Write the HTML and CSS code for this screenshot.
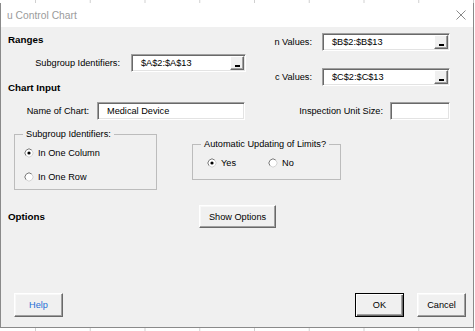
FILE: index.html
```html
<!DOCTYPE html>
<html>
<head>
<meta charset="utf-8">
<link rel="stylesheet" href="styles.css">
</head>
<body>
<div class="desk">
  <div class="window">
    <div class="titlebar">
      <span class="title">u Control Chart</span>
      <svg class="close" width="10" height="10" viewBox="0 0 10 10"><path d="M0.5 0.5 L9.5 9.5 M9.5 0.5 L0.5 9.5" stroke="#8a8a8a" stroke-width="1" fill="none"/></svg>
    </div>
    <div class="content">
      <div class="top">
        <div class="left">
          <div class="heading ranges">Ranges</div>
          <div class="field sub">
            <span class="lbl">Subgroup Identifiers:</span>
            <div class="box range w-sub"><span>$A$2:$A$13</span><span class="rbtn"><i></i></span></div>
          </div>
          <div class="heading chart">Chart Input</div>
        </div>
        <div class="right">
          <div class="field nrow">
            <span class="lbl">n Values:</span>
            <div class="box range w-val"><span>$B$2:$B$13</span><span class="rbtn"><i></i></span></div>
          </div>
          <div class="field crow">
            <span class="lbl">c Values:</span>
            <div class="box range w-val"><span>$C$2:$C$13</span><span class="rbtn"><i></i></span></div>
          </div>
        </div>
      </div>

      <div class="field chartrow">
        <span class="lbl lbl-name">Name of Chart:</span>
        <div class="box w-name"><span>Medical Device</span></div>
        <span class="lbl lbl-insp">Inspection Unit Size:</span>
        <div class="box w-insp"></div>
      </div>

      <div class="groups">
        <div class="group g1">
          <span class="legend">Subgroup Identifiers:</span>
          <div class="radio-row">
            <svg class="radio" width="10" height="10" viewBox="0 0 10 10"><circle cx="5" cy="5" r="4" fill="#fff"/><path d="M2.17 7.83 A4 4 0 0 1 7.83 2.17" stroke="#7a7a7a" fill="none"/><path d="M7.83 2.17 A4 4 0 0 1 2.17 7.83" stroke="#d4d4d4" fill="none"/><circle cx="5" cy="5" r="1.6" fill="#000"/></svg>
            <span>In One Column</span>
          </div>
          <div class="radio-row second">
            <svg class="radio" width="10" height="10" viewBox="0 0 10 10"><circle cx="5" cy="5" r="4" fill="#fff"/><path d="M2.17 7.83 A4 4 0 0 1 7.83 2.17" stroke="#7a7a7a" fill="none"/><path d="M7.83 2.17 A4 4 0 0 1 2.17 7.83" stroke="#d4d4d4" fill="none"/></svg>
            <span>In One Row</span>
          </div>
        </div>
        <div class="group g2">
          <span class="legend">Automatic Updating of Limits?</span>
          <div class="radio-row yes">
            <svg class="radio" width="10" height="10" viewBox="0 0 10 10"><circle cx="5" cy="5" r="4" fill="#fff"/><path d="M2.17 7.83 A4 4 0 0 1 7.83 2.17" stroke="#7a7a7a" fill="none"/><path d="M7.83 2.17 A4 4 0 0 1 2.17 7.83" stroke="#d4d4d4" fill="none"/><circle cx="5" cy="5" r="1.6" fill="#000"/></svg>
            <span>Yes</span>
          </div>
          <div class="radio-row">
            <svg class="radio" width="10" height="10" viewBox="0 0 10 10"><circle cx="5" cy="5" r="4" fill="#fff"/><path d="M2.17 7.83 A4 4 0 0 1 7.83 2.17" stroke="#7a7a7a" fill="none"/><path d="M7.83 2.17 A4 4 0 0 1 2.17 7.83" stroke="#d4d4d4" fill="none"/></svg>
            <span>No</span>
          </div>
        </div>
      </div>

      <div class="options">
        <span class="heading opt-label">Options</span>
        <button class="btn show">Show Options</button>
      </div>

      <div class="actions">
        <button class="btn help">Help</button>
        <button class="btn ok">OK</button>
        <button class="btn cancel">Cancel</button>
      </div>
    </div>
  </div>
</div>
</body>
</html>
```

FILE: styles.css
```css
* { box-sizing: border-box; }

body {
  margin: 0;
  width: 475px;
  height: 331px;
  overflow: hidden;
  font-family: "Liberation Sans", Arial, sans-serif;
  font-size: 9.2px;
  color: #000;
  background-color: #fff;
  background-image: linear-gradient(to right, #d0d0d0 1px, transparent 1px);
  background-size: 54.75px 100%;
  background-position: 35px 0;
}

.desk {
  height: 331px;
  padding-top: 3px;
}

.window {
  width: 474px;
  height: 325px;
  border: 1px solid #8a8a8a;
  border-top: none;
  background: #f0f0f0;
  display: flex;
  flex-direction: column;
}

.titlebar {
  height: 24px;
  flex: none;
  background: #fff;
  display: flex;
  align-items: center;
  justify-content: space-between;
  padding: 0 7px 0 6px;
}

.title {
  font-size: 10.3px;
  color: #9b9b9b;
}

.content {
  flex: 1;
  display: flex;
  flex-direction: column;
  padding: 0 7px 10px 7px;
}

.top { display: flex; }
.left { width: 238px; }
.right { flex: 1; }

.heading {
  font-weight: bold;
  font-size: 9.8px;
  line-height: 12px;
  height: 12px;
}
.ranges { margin-top: 7px; }
.chart { margin-top: 10px; }

.field {
  display: flex;
  align-items: center;
}
.lbl { text-align: right; white-space: nowrap; }

.sub { margin-top: 8px; }
.sub .lbl { width: 112px; margin-right: 11px; }

.right .lbl { width: 66px; margin-right: 10px; }
.nrow { margin-top: 6px; }
.crow { margin-top: 17px; }

.box {
  height: 18px;
  background: #fff;
  border: 1px solid;
  border-color: #a0a0a0 #fff #fff #a0a0a0;
  box-shadow: inset 1px 1px #696969, inset -1px -1px #e3e3e3;
  display: flex;
  align-items: center;
  padding-left: 9px;
  white-space: nowrap;
}
.range {
  justify-content: space-between;
  align-items: stretch;
  padding-right: 1px;
}
.range > span:first-child {
  display: flex;
  align-items: center;
}
.w-sub { width: 115px; }
.w-val { width: 128px; }
.w-name { width: 148px; }
.w-insp { width: 60px; }

.rbtn {
  align-self: flex-end;
  width: 14px;
  height: 14px;
  margin-bottom: 1px;
  background: #f0f0f0;
  border: 1px solid;
  border-color: #fff #696969 #696969 #fff;
  box-shadow: inset -1px -1px #a0a0a0;
  display: flex;
  justify-content: center;
  align-items: flex-end;
  padding-bottom: 2px;
}
.rbtn i {
  display: block;
  width: 5px;
  height: 2px;
  background: #000;
}

.chartrow { margin-top: 8px; }
.lbl-name { width: 81px; margin-right: 8px; }
.lbl-insp { width: 138px; margin-right: 7px; }

.groups {
  display: flex;
  align-items: flex-start;
  margin-top: 14px;
}
.group {
  position: relative;
  border: 1px solid #bcbcbc;
}
.legend {
  position: absolute;
  top: -7px;
  left: 8px;
  padding: 0 3px;
  line-height: 12px;
  background: #f0f0f0;
  white-space: nowrap;
}
.g1 {
  margin-left: 6px;
  width: 143px;
  height: 56px;
  padding: 12px 0 0 9px;
}
.g2 {
  margin-left: 35px;
  margin-top: 10px;
  width: 149px;
  height: 36px;
  padding: 12px 0 0 14px;
  display: flex;
}
.radio-row {
  display: flex;
  align-items: center;
  height: 12px;
  gap: 4px;
}
.radio-row.second { margin-top: 12px; }
.radio { flex: none; }
.g2 .yes { width: 61px; }

.options {
  margin-top: 15px;
  display: flex;
  align-items: center;
  height: 23px;
}
.opt-label { width: 191px; }

.btn {
  font-family: inherit;
  font-size: 9.2px;
  color: #000;
  background: #f0f0f0;
  border: 1px solid;
  border-color: #fff #696969 #696969 #fff;
  box-shadow: inset -1px -1px #a0a0a0, inset 1px 1px #f8f8f8;
  padding: 0;
  margin: 0;
  text-align: center;
}
.show { width: 77px; height: 23px; }

.actions {
  margin-top: auto;
  display: flex;
}
.actions .btn { width: 49px; height: 24px; }
.help { margin-left: 6px; color: #1f6fd6; }
.ok {
  margin-left: auto;
  border: 1px solid #000;
  box-shadow: inset 1px 1px #fff, inset -1px -1px #696969, inset -2px -2px #a0a0a0;
}
.cancel { margin-left: 13px; }
```
